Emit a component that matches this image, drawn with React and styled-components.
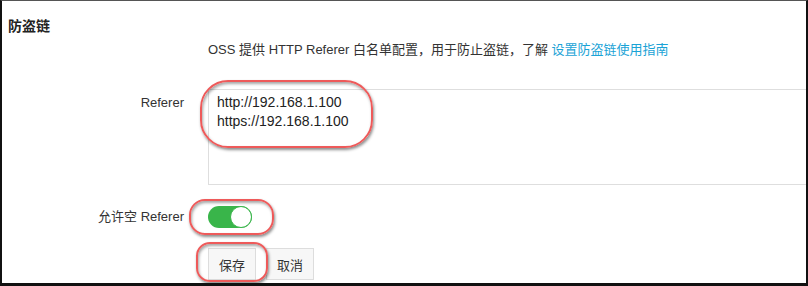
import styled, { createGlobalStyle } from "styled-components";

const GlobalStyle = createGlobalStyle`
  html, body {
    margin: 0;
    padding: 0;
    background: #fff;
  }
  body {
    font-family: "Liberation Sans", Arial, "Noto Sans CJK SC", sans-serif;
    color: #333;
  }
`;

const urls = ["http://192.168.1.100", "https://192.168.1.100"];

export default function App() {
  return (
    <>
      <GlobalStyle />
      <Frame>
        <Title>防盗链</Title>
        <Row $top={4}>
          <span />
          <Description>
            OSS 提供 HTTP Referer 白名单配置，用于防止盗链，了解{" "}
            <GuideLink href="#">设置防盗链使用指南</GuideLink>
          </Description>
        </Row>
        <Row $top={29}>
          <Label $pad={4}>Referer</Label>
          <Control>
            <RefererInput readOnly value={urls.join("\n")} />
            <Mark $left={-8} $top={-9} $w={173} $h={68} $r={28} />
          </Control>
        </Row>
        <Row $top={21} $center>
          <Label>允许空 Referer</Label>
          <Control>
            <Switch type="button" aria-checked="true" role="switch">
              <Knob />
            </Switch>
            <Mark $left={-19} $top={-7} $w={85} $h={36} $r={16} />
          </Control>
        </Row>
        <Row $top={20}>
          <span />
          <Actions>
            <Control>
              <Button>保存</Button>
              <Mark $left={-12} $top={-6} $w={72} $h={40} $r={14} />
            </Control>
            <Button>取消</Button>
          </Actions>
        </Row>
      </Frame>
    </>
  );
}

const Frame = styled.div`
  width: 808px;
  height: 286px;
  box-sizing: border-box;
  border-top: 1px solid #555;
  border-left: 2px solid #111;
  border-right: 2px solid #111;
  border-bottom: 3px solid #111;
  overflow: hidden;
  position: relative;
  background: #fff;
`;

const Title = styled.h3`
  margin: 0;
  padding: 15px 0 0 6px;
  font-size: 14px;
  line-height: 20px;
  font-weight: bold;
  color: #222;
`;

const Row = styled.div`
  display: grid;
  grid-template-columns: 182px 1fr;
  column-gap: 24px;
  margin-top: ${(p) => p.$top}px;
  align-items: ${(p) => (p.$center ? "center" : "start")};
`;

const Label = styled.label`
  text-align: right;
  font-size: 13px;
  line-height: 20px;
  padding-top: ${(p) => p.$pad || 0}px;
  color: #333;
  white-space: nowrap;
`;

const Description = styled.p`
  margin: 0;
  font-size: 13px;
  line-height: 20px;
  color: #333;
  white-space: nowrap;
`;

const GuideLink = styled.a`
  color: #1ba3d6;
  text-decoration: none;
`;

const Control = styled.div`
  position: relative;
  display: flex;
  align-items: center;
`;

const RefererInput = styled.textarea`
  width: 640px;
  height: 96px;
  box-sizing: border-box;
  border: 1px solid #dedede;
  border-radius: 0;
  padding: 3px 8px;
  font-family: inherit;
  font-size: 14px;
  line-height: 19px;
  color: #222;
  resize: none;
  outline: none;
  background: #fff;
`;

const Switch = styled.button`
  width: 44px;
  height: 22px;
  padding: 0;
  border: none;
  border-radius: 11px;
  background: #39b54a;
  position: relative;
  cursor: pointer;
`;

const Knob = styled.span`
  position: absolute;
  right: 0;
  top: 0;
  width: 22px;
  height: 22px;
  box-sizing: border-box;
  border-radius: 50%;
  border: 1px solid #39b54a;
  background: #fff;
`;

const Actions = styled.div`
  display: flex;
  gap: 10px;
`;

const Button = styled.button`
  height: 32px;
  padding: 0 10px;
  box-sizing: border-box;
  border: 1px solid #ddd;
  background: #f7f7f7;
  font-family: inherit;
  font-size: 13px;
  color: #333;
  border-radius: 0;
  cursor: pointer;
`;

const Mark = styled.div`
  position: absolute;
  left: ${(p) => p.$left}px;
  top: ${(p) => p.$top}px;
  width: ${(p) => p.$w}px;
  height: ${(p) => p.$h}px;
  box-sizing: border-box;
  border: 2px solid #ee5a5a;
  border-radius: ${(p) => p.$r}px;
  box-shadow: 1px 2px 3px rgba(0, 0, 0, 0.45),
    inset 1px 2px 3px rgba(0, 0, 0, 0.35);
  pointer-events: none;
`;
